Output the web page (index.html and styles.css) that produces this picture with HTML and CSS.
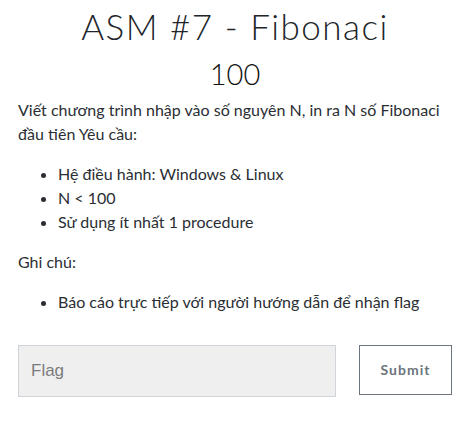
FILE: index.html
```html
<!DOCTYPE html>
<html lang="vi">
<head>
<meta charset="utf-8">
<link rel="stylesheet" href="styles.css">
</head>
<body>
<div class="modal">
  <h3 class="name">ASM #7 - Fibonaci</h3>
  <h4 class="value">100</h4>
  <div class="desc">
    <p>Viết chương trình nhập vào số nguyên N, in ra N số Fibonaci đầu tiên Yêu cầu:</p>
    <ul>
      <li>Hệ điều hành: Windows &amp; Linux</li>
      <li>N &lt; 100</li>
      <li>Sử dụng ít nhất 1 procedure</li>
    </ul>
    <p>Ghi chú:</p>
    <ul>
      <li>Báo cáo trực tiếp với người hướng dẫn để nhận flag</li>
    </ul>
  </div>
  <div class="submit-row">
    <input class="flag" type="text" placeholder="Flag">
    <button class="submit" type="button">Submit</button>
  </div>
</div>
</body>
</html>
```

FILE: styles.css
```css
html, body {
  margin: 0;
  padding: 0;
  background: #fff;
}
body {
  font-family: Lato, "Noto Sans", sans-serif;
  color: #2a2e33;
  font-size: 16px;
  line-height: 1.5;
}
.modal {
  padding: 5px 13px 0 18px;
}
.name {
  margin: 0;
  text-align: center;
  font-family: Lato, sans-serif;
  font-weight: 300;
  font-size: 35px;
  line-height: 1.2;
  letter-spacing: 1.5px;
  color: #212529;
}
.value {
  margin: 10px 0 6px;
  text-align: center;
  font-weight: 300;
  font-size: 29px;
  line-height: 1.2;
  color: #111;
}
.desc p {
  margin: 0 0 16px;
}
.desc ul {
  margin: 0 0 16px;
  padding-left: 40px;
}
.submit-row {
  display: flex;
  align-items: flex-start;
  gap: 23px;
  margin-top: 31px;
}
.flag {
  flex: 1;
  min-width: 0;
  height: 52px;
  box-sizing: border-box;
  background: #efefef;
  border: 1px solid #ced4da;
  border-radius: 0;
  padding: 0 12px;
  font-family: "Liberation Sans", Arial, sans-serif;
  font-size: 17px;
  color: #495057;
}
.flag::placeholder {
  color: #7c7c7c;
}
.submit {
  width: 93px;
  height: 50px;
  box-sizing: border-box;
  background: #fff;
  border: 1px solid #6c757d;
  border-radius: 0;
  padding: 0;
  font-family: Lato, sans-serif;
  font-weight: 700;
  font-size: 14px;
  letter-spacing: 1px;
  color: #6c757d;
}
```
